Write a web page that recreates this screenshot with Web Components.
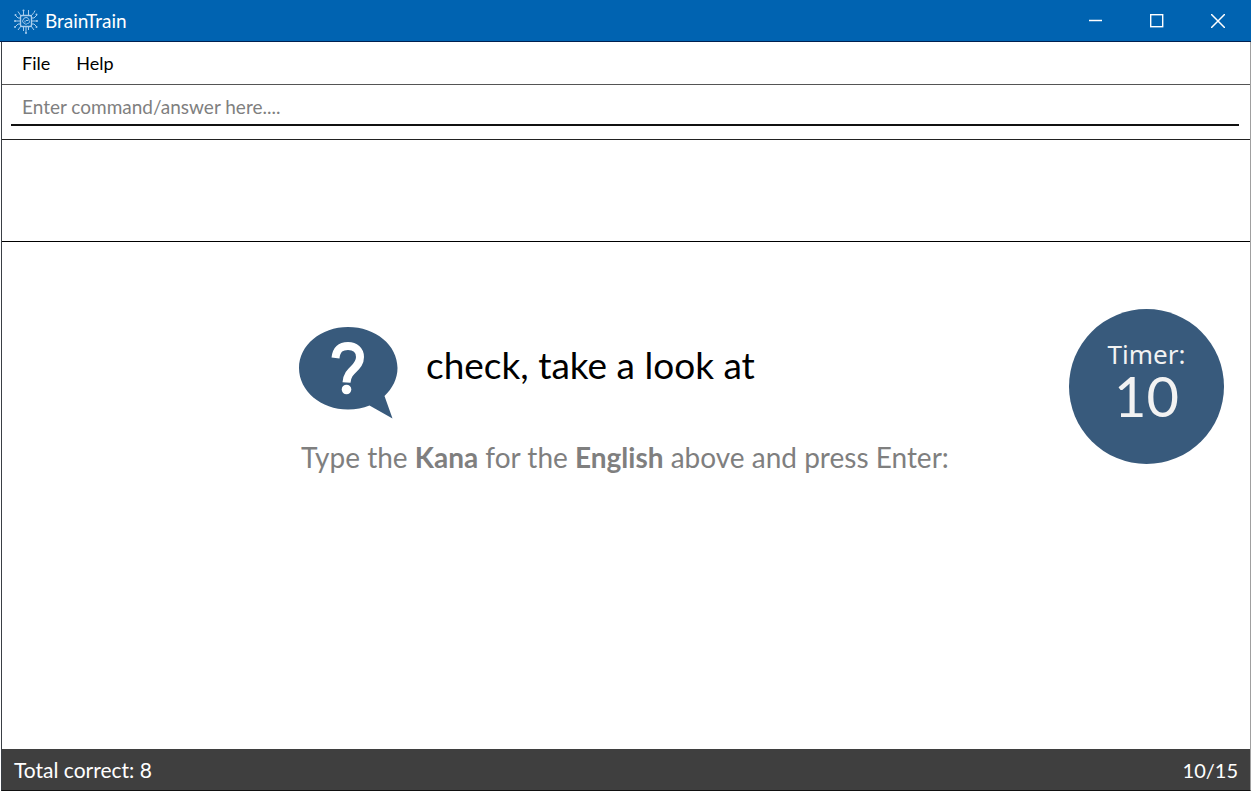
<!DOCTYPE html>
<html lang="en">
<head>
<meta charset="utf-8">
<title>BrainTrain</title>
<style>
  body { margin: 0; background: #fff; font-family: Lato, "Noto Sans", sans-serif; color: #000; }
</style>
</head>
<body>
<brain-train></brain-train>

<template id="t-app">
  <style>
    :host { display: flex; flex-direction: column; min-height: 100vh; box-sizing: border-box; padding: 0 2px 7px 0; }
    .frame { flex: 1; display: flex; flex-direction: column; box-sizing: border-box; margin-left: 1px; border-left: 1px solid #3a3f45; border-right: 1px solid #a0a0a0; border-bottom: 1px solid #111; }
    main { flex: 1; display: grid; grid-template-columns: 1fr 656px 1fr; align-items: start; padding-top: 67px; }
    .result { height: 101px; border-bottom: 1px solid #000; }
    quiz-question { grid-column: 2; margin-top: 18px; }
    quiz-timer { grid-column: 3; justify-self: end; margin-right: 26px; }
    .total { font-size: 21px; }
  </style>
  <title-bar>BrainTrain</title-bar>
  <div class="frame">
    <menu-strip></menu-strip>
    <command-box></command-box>
    <div class="result" role="status"></div>
    <main>
      <quiz-question>
        <span slot="word">check, take a look at</span>
        <span slot="hint">Type the <b>Kana</b> for the <b>English</b> above and press Enter:</span>
      </quiz-question>
      <quiz-timer label="Timer:">10</quiz-timer>
    </main>
    <status-bar>
      <span slot="left" class="total">Total correct: 8</span>
      <span slot="right">10/15</span>
    </status-bar>
  </div>
</template>

<template id="t-title">
  <style>
    :host { display: flex; align-items: center; height: 41px; background: #0063b1; color: #fff; border-bottom: 1px solid #002050; font-size: 19px; line-height: 24px; padding-left: 14px; }
    .logo { width: 24px; height: 26px; margin-right: 7px; flex: none; }
    .name { flex: 1; }
    button { width: 61px; height: 41px; padding: 0; border: 0; background: none; color: inherit; display: grid; place-items: center; }
    button svg { display: block; }
    .controls { display: flex; padding-right: 3px; }
  </style>
  <svg class="logo" viewBox="0 0 24 26" fill="none" stroke="#a9cdec" stroke-width="1" aria-hidden="true">
    <rect x="6.5" y="7.5" width="11" height="11" rx="1.5" stroke-width="1.4"/>
    <path d="M12 9.5a3.2 3.2 0 0 0-3 2.5c-1 1 0 3 1 3 .5 1.500 3 1.500 3.500.5 2 0 2.500-2 1.500-3 0-2-1.500-3-3-3zM12 12.500h2M11 14.500v-2"/>
    <path d="M9.500 7V2.500M14.500 7V2M9.500 19v4M12 19v6M14.500 19v3M6 10H4L1 7M6 13H1M6 16H4l-3 3M18 10h2l3-3M18 13h5M18 16h2l3 3M7 8L4 3.500M17 8l3-3.500 1-2M7 18l-3 4M17 18l3 4"/>
    <g fill="#a9cdec" stroke="none"><circle cx="9.500" cy="2.500" r="1"/><circle cx="12" cy="25" r="1"/><circle cx="1" cy="13" r="1"/><circle cx="23" cy="13" r="1"/><circle cx="1.500" cy="7" r="1"/><circle cx="22.500" cy="6.500" r="1"/><circle cx="1" cy="19" r="1"/><circle cx="22.500" cy="19" r="1"/></g>
  </svg>
  <span class="name"><slot></slot></span>
  <div class="controls">
    <button type="button" aria-label="Minimize"><svg width="14" height="14"><path d="M0 6.500h13" stroke="#fff" stroke-width="1.500"/></svg></button>
    <button type="button" aria-label="Maximize"><svg width="14" height="14"><rect x="0.700" y="0.700" width="12" height="12" fill="none" stroke="#fff" stroke-width="1.400"/></svg></button>
    <button type="button" aria-label="Close"><svg width="14" height="14"><path d="M0 0l14 14M14 0L0 14" stroke="#fff" stroke-width="1.500"/></svg></button>
  </div>
</template>

<template id="t-menu">
  <style>
    :host { display: block; border-bottom: 1px solid #555; }
    nav { display: flex; gap: 26px; height: 42px; align-items: center; padding-left: 20px; }
    button { font: inherit; font-size: 18px; line-height: 24px; color: #000; background: none; border: 0; padding: 0; }
  </style>
  <nav aria-label="Main menu"><button type="button">File</button><button type="button">Help</button></nav>
</template>

<template id="t-command">
  <style>
    :host { display: block; padding: 4px 11px 13px 9px; border-bottom: 1px solid #222; }
    input { display: block; width: 100%; height: 37px; box-sizing: border-box; padding: 0 11px; border: 0; border-bottom: 2px solid #111; background: none; font: inherit; font-size: 19px; color: #000; outline: 0; border-radius: 0; }
    input::placeholder { color: #7f7f7f; opacity: 1; }
  </style>
  <input type="text" placeholder="Enter command/answer here...." aria-label="Command or answer">
</template>

<template id="t-question">
  <style>
    :host { display: block; }
    .row { display: flex; align-items: flex-start; gap: 28px; }
    svg { display: block; width: 100px; height: 92px; flex: none; }
    .word { font-size: 37px; line-height: 48px; margin-top: 14px; white-space: nowrap; }
    .hint { margin: 20px 0 0 3px; font-size: 28px; line-height: 36px; color: #7f7f7f; white-space: nowrap; }
  </style>
  <div class="row">
    <svg viewBox="0 0 100 92" aria-hidden="true">
      <path fill="#385a7c" d="M50 0C77.500 0 99.500 18 99.500 41C99.500 51.500 94.500 61.500 86.500 69L94.500 91.500L71.500 78.500C65 81 58 82.500 50 82.500C23 82.500 1 64 1 41S23 0 50 0Z"/>
      <path fill="none" stroke="#fff" stroke-width="8" d="M37.500 31C38.500 22 43 19 50 19C57 19 62 23 62 30C62 42 49.500 41.500 48.500 55.500"/>
      <circle cx="48.500" cy="62.500" r="4.800" fill="#fff"/>
    </svg>
    <div class="word"><slot name="word"></slot></div>
  </div>
  <div class="hint"><slot name="hint"></slot></div>
</template>

<template id="t-timer">
  <style>
    :host { display: flex; flex-direction: column; align-items: center; box-sizing: border-box; width: 155px; height: 155px; padding-top: 28px; border-radius: 50%; background: #385a7c; color: #f2f2f2; }
    .label { font: 26px/34px "Noto Sans", sans-serif; }
    .value { font-size: 56px; line-height: 50px; }
  </style>
  <span class="label"></span>
  <span class="value"><slot></slot></span>
</template>

<template id="t-status">
  <style>
    :host { display: flex; justify-content: space-between; align-items: center; height: 41px; padding: 0 12px; background: #3f3f3f; color: #fff; font-size: 20px; line-height: 28px; }
  </style>
  <slot name="left"></slot><slot name="right"></slot>
</template>

<script>
  class Base extends HTMLElement {
    constructor() {
      super();
      const t = document.getElementById(this.constructor.template);
      this.attachShadow({ mode: "open" }).append(t.content.cloneNode(true));
    }
  }
  class TitleBar extends Base { static template = "t-title"; }
  class MenuStrip extends Base { static template = "t-menu"; }
  class CommandBox extends Base { static template = "t-command"; }
  class QuizQuestion extends Base { static template = "t-question"; }
  class QuizTimer extends Base {
    static template = "t-timer";
    connectedCallback() {
      this.shadowRoot.querySelector(".label").textContent = this.getAttribute("label");
    }
  }
  class StatusBar extends Base { static template = "t-status"; }
  class BrainTrain extends Base { static template = "t-app"; }
  customElements.define("title-bar", TitleBar);
  customElements.define("menu-strip", MenuStrip);
  customElements.define("command-box", CommandBox);
  customElements.define("quiz-question", QuizQuestion);
  customElements.define("quiz-timer", QuizTimer);
  customElements.define("status-bar", StatusBar);
  customElements.define("brain-train", BrainTrain);
</script>
</body>
</html>
